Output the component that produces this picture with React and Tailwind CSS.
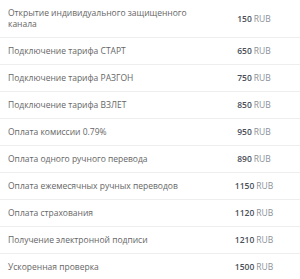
const rows = [
  { label: "Открытие индивидуального защищенного канала", price: "150" },
  { label: "Подключение тарифа СТАРТ", price: "650" },
  { label: "Подключение тарифа РАЗГОН", price: "750" },
  { label: "Подключение тарифа ВЗЛЕТ", price: "850" },
  { label: "Оплата комиссии 0.79%", price: "950" },
  { label: "Оплата одного ручного перевода", price: "890" },
  { label: "Оплата ежемесячных ручных переводов", price: "1150" },
  { label: "Оплата страхования", price: "1120" },
  { label: "Получение электронной подписи", price: "1210" },
  { label: "Ускоренная проверка", price: "1500" },
];

// Price list: label on the left, amount centred in the right column
export default function App() {
  return (
    <div className="w-[300px] bg-white font-['Open_Sans',sans-serif] text-[8.5px] leading-[11px]">
      {rows.map((row) => (
        <div key={row.label} className="grid grid-cols-[208px_1fr] border-b border-[#eeeeee] pt-[7px] pb-[8px]">
          <div className="pl-2 pr-2 text-[#666666]">{row.label}</div>
          <div className="flex items-center justify-center text-[#8a9099]">
            <span className="font-semibold text-[#4a5059]">{row.price}</span>
            <span className="ml-[2px]">RUB</span>
          </div>
        </div>
      ))}
    </div>
  );
}
